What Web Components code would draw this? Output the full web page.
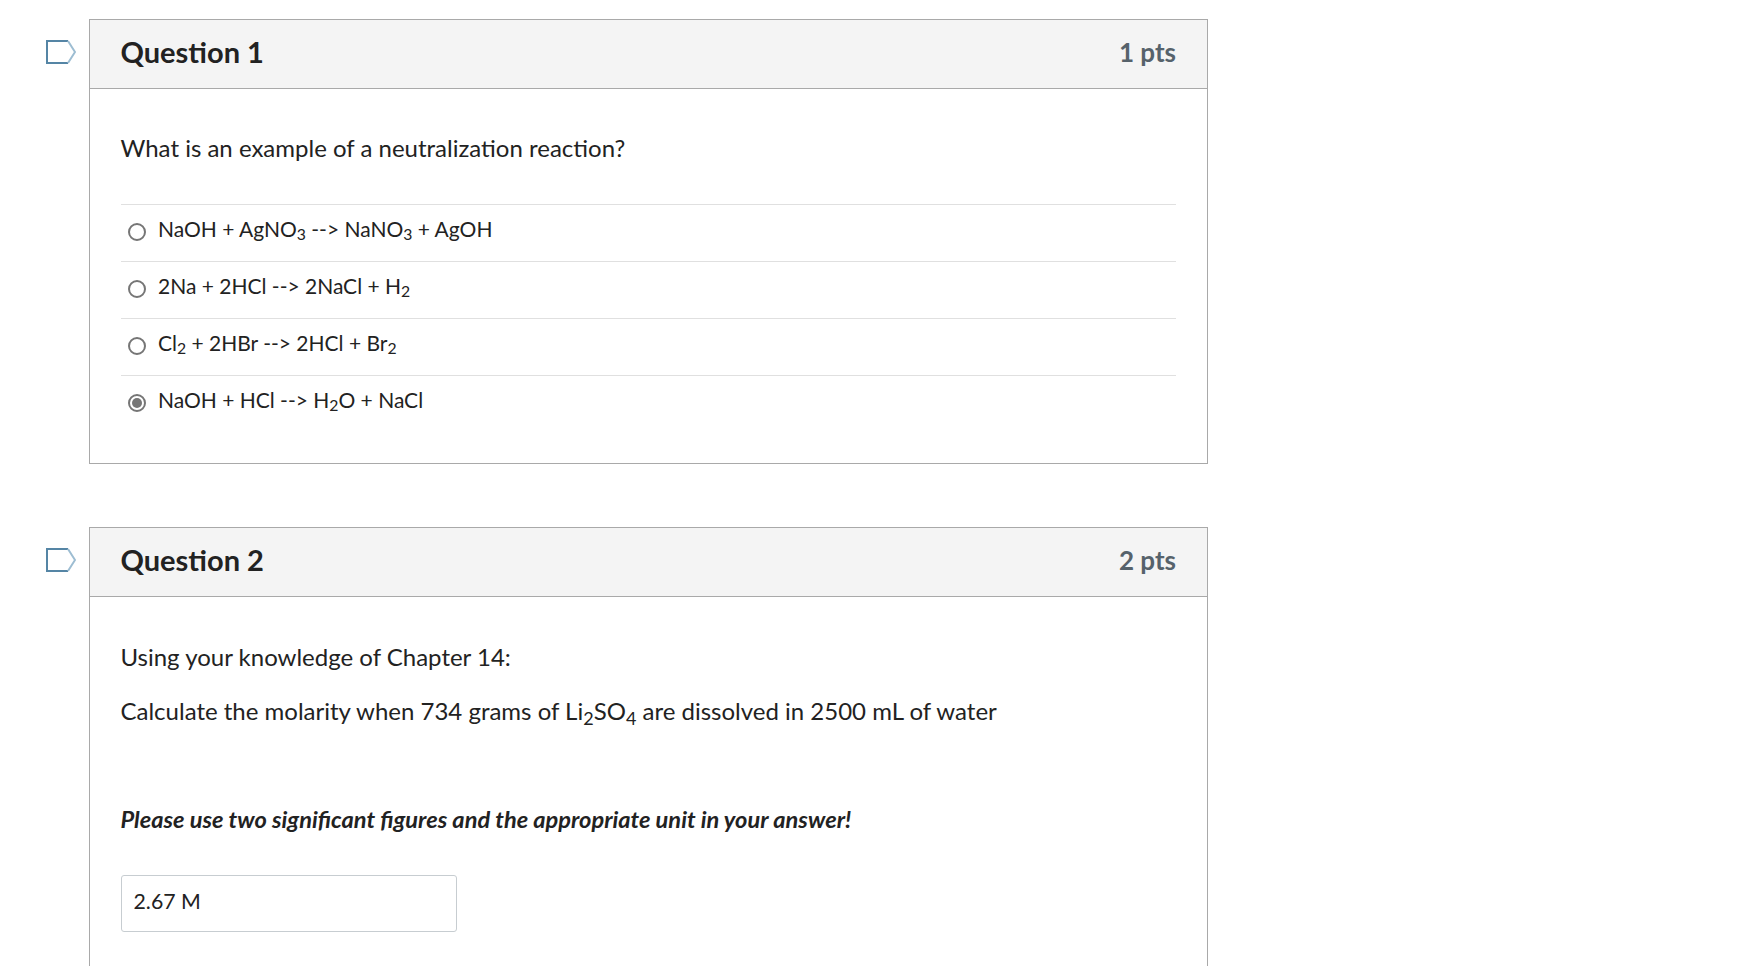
<!DOCTYPE html>
<html>
<head>
<meta charset="utf-8">
<title>Quiz</title>
<style>
html, body { margin: 0; background: #fff; }
body { height: 966px; overflow: hidden; font-family: Lato, "Liberation Sans", sans-serif; color: #222; }
#page { display: flex; flex-direction: column; gap: 63px; padding-top: 19px; }
</style>
</head>
<body>
<div id="page">
  <quiz-question name="Question 1" pts="1 pts">
    <p class="lead">What is an example of a neutralization reaction?</p>
    <answer-list>
      <answer-row>NaOH + AgNO<sub>3</sub> --&gt; NaNO<sub>3</sub> + AgOH</answer-row>
      <answer-row>2Na + 2HCl --&gt; 2NaCl + H<sub>2</sub></answer-row>
      <answer-row>Cl<sub>2</sub> + 2HBr --&gt; 2HCl + Br<sub>2</sub></answer-row>
      <answer-row checked>NaOH + HCl --&gt; H<sub>2</sub>O + NaCl</answer-row>
    </answer-list>
  </quiz-question>
  <quiz-question name="Question 2" pts="2 pts">
    <p class="lead intro">Using your knowledge of Chapter 14:</p>
    <p class="lead">Calculate the molarity when 734 grams of Li<sub>2</sub>SO<sub>4</sub> are dissolved in 2500 mL of water</p>
    <p class="lead note">Please use two significant figures and the appropriate unit in your answer!</p>
    <text-answer value="2.67 M"></text-answer>
  </quiz-question>
</div>

<script>
"use strict";
const QUESTION = `<style>
:host { display: flex; align-items: flex-start; }
.flag { width: 89px; flex: none; display: flex; padding: 21px 0 0 46px; box-sizing: border-box; }
.card { width: 1119px; flex: none; box-sizing: border-box; border: 1px solid #a9a9a9; }
header { display: flex; justify-content: space-between; align-items: center; height: 64px; padding: 0 31px 4px 30.5px; background: #f4f4f4; border-bottom: 1px solid #a9a9a9; }
h2 { margin: 0 0 2px; font-size: 29px; font-weight: 700; color: #222; line-height: 1; }
.pts { font-size: 26px; font-weight: 700; color: #56626b; }
.body { padding: 41px 31px 0 30.5px; }
</style>
<div class="flag">
  <svg width="30" height="24" viewBox="0 0 30 24">
    <path d="M22 1H1V23H22" fill="none" stroke="#5585a5" stroke-width="2"/>
    <path d="M22 1L29 12L22 23" fill="none" stroke="#9dbdd2" stroke-width="2"/>
  </svg>
</div>
<div class="card">
  <header><h2></h2><span class="pts"></span></header>
  <div class="body"><slot></slot></div>
</div>`
class QuizQuestion extends HTMLElement {
  constructor() {
    super();
    let sr = this.attachShadow({mode: 'open'})
    sr.innerHTML = QUESTION
    sr.querySelector('h2').textContent = this.getAttribute('name')
    sr.querySelector('.pts').textContent = this.getAttribute('pts')
  }
}
customElements.define('quiz-question', QuizQuestion);

class AnswerList extends HTMLElement {
  constructor() {
    super();
    this.attachShadow({mode: 'open'}).innerHTML = `<style>
:host { display: block; margin-top: 38px; padding-bottom: 31px; }
</style><slot></slot>`
  }
}
customElements.define('answer-list', AnswerList);

class AnswerRow extends HTMLElement {
  constructor() {
    super();
    let on = this.hasAttribute('checked')
    this.attachShadow({mode: 'open'}).innerHTML = `<style>
:host { display: flex; align-items: center; height: 56px; border-top: 1px solid #e0e0e0; padding-left: 7px; font-size: 21px; }
.radio { width: 18px; height: 18px; box-sizing: border-box; border: 2px solid #767676; border-radius: 50%; margin: 0 12.5px 2px 0; display: flex; align-items: center; justify-content: center; flex: none; }
.dot { width: 10px; height: 10px; border-radius: 50%; background: #767676; }
.label { position: relative; top: -5px; }
</style><span class="radio">${on ? '<span class="dot"></span>' : ''}</span><span class="label"><slot></slot></span>`
  }
}
customElements.define('answer-row', AnswerRow);

class TextAnswer extends HTMLElement {
  constructor() {
    super();
    this.attachShadow({mode: 'open'}).innerHTML = `<style>
:host { display: block; margin-top: 38px; margin-bottom: 60px; width: 336px; height: 57px; box-sizing: border-box; border: 1px solid #c7cdd1; border-radius: 3px; padding: 0 12px; font-size: 21.3px; line-height: 51px; }
</style>${this.getAttribute('value')}`
  }
}
customElements.define('text-answer', TextAnswer);
</script>
<style>
sub { font-size: 75%; line-height: 0; vertical-align: baseline; position: relative; bottom: -0.25em; }
p.lead { margin: 0 0 19px; font-size: 24px; line-height: 36px; }
p.intro { margin: 1px 0 18px; }
p.note { margin: 72px 0 0; font-size: 23.6px; font-weight: 700; font-style: italic; }
</style>
</body>
</html>
